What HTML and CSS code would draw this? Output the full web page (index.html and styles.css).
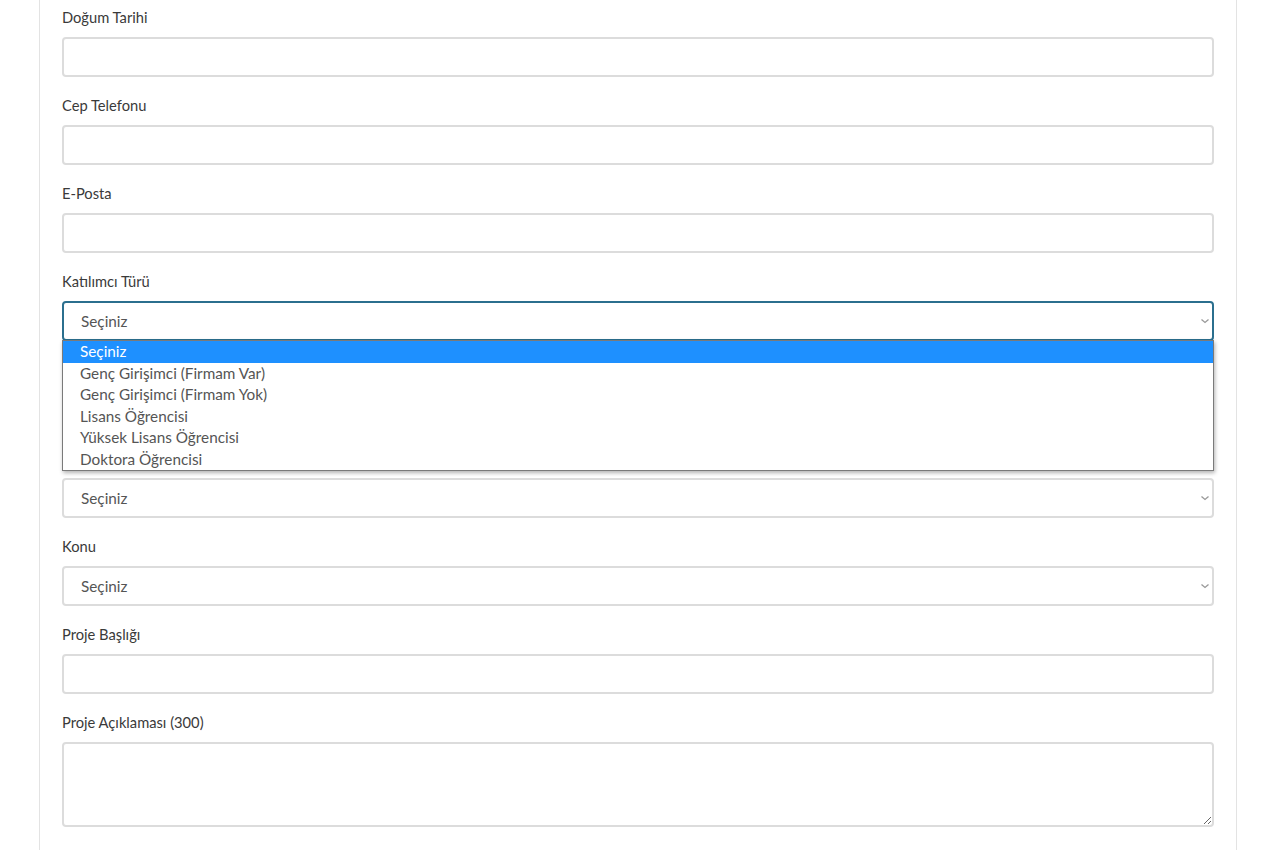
FILE: index.html
```html
<!DOCTYPE html>
<html lang="tr">

<head>
  <meta charset="UTF-8">
  <meta name="viewport" content="width=device-width, initial-scale=1.0">
  <title>Başvuru Formu</title>
  <link rel="stylesheet" href="styles.css">
</head>

<body>
  <div class="card">
    <form class="form">
      <div class="field">
        <label class="label">Doğum Tarihi</label>
        <input class="control" type="text">
      </div>
      <div class="field">
        <label class="label">Cep Telefonu</label>
        <input class="control" type="text">
      </div>
      <div class="field">
        <label class="label">E-Posta</label>
        <input class="control" type="text">
      </div>
      <div class="field">
        <label class="label">Katılımcı Türü</label>
        <div class="select_wrap">
          <select class="control select focused">
            <option>Seçiniz</option>
          </select>
          <svg class="chevron" width="10" height="6" viewBox="0 0 10 6"><path d="M1.5 1.5l3.5 3 3.5-3" fill="none" stroke="#999" stroke-width="1.3"/></svg>
          <ul class="options">
            <li class="option active">Seçiniz</li>
            <li class="option">Genç Girişimci (Firmam Var)</li>
            <li class="option">Genç Girişimci (Firmam Yok)</li>
            <li class="option">Lisans Öğrencisi</li>
            <li class="option">Yüksek Lisans Öğrencisi</li>
            <li class="option">Doktora Öğrencisi</li>
          </ul>
        </div>
      </div>
      <!-- these two sit under the open list -->
      <div class="field">
        <label class="label">&nbsp;</label>
        <input class="control" type="text">
      </div>
      <div class="field">
        <label class="label">&nbsp;</label>
        <div class="select_wrap">
          <select class="control select">
            <option>Seçiniz</option>
          </select>
          <svg class="chevron" width="10" height="6" viewBox="0 0 10 6"><path d="M1.5 1.5l3.5 3 3.5-3" fill="none" stroke="#999" stroke-width="1.3"/></svg>
        </div>
      </div>
      <div class="field">
        <label class="label">Konu</label>
        <div class="select_wrap">
          <select class="control select">
            <option>Seçiniz</option>
          </select>
          <svg class="chevron" width="10" height="6" viewBox="0 0 10 6"><path d="M1.5 1.5l3.5 3 3.5-3" fill="none" stroke="#999" stroke-width="1.3"/></svg>
        </div>
      </div>
      <div class="field">
        <label class="label">Proje Başlığı</label>
        <input class="control" type="text">
      </div>
      <div class="field">
        <label class="label">Proje Açıklaması (300)</label>
        <textarea class="control textarea"></textarea>
      </div>
    </form>
  </div>
</body>

</html>
```

FILE: styles.css
```css
body {
  margin: 0;
  background: #fff;
  font-family: Lato, "Noto Sans", sans-serif;
  color: #333;
}

.card {
  width: 1198px;
  margin: 0 0 0 39px;
  border-left: 1px solid #e3e3e3;
  border-right: 1px solid #e3e3e3;
  padding: 7px 22px 40px 22px;
  box-sizing: border-box;
}

.field {
  margin-bottom: 18.15px;
}

.label {
  display: block;
  font-size: 14.7px;
  line-height: 20px;
  margin-bottom: 10px;
  color: #3a3a3a;
  font-weight: 400;
}

.control {
  display: block;
  width: 100%;
  height: 40px;
  box-sizing: border-box;
  border: 2px solid #dcdcdc;
  border-radius: 4px;
  padding: 0 17px;
  font-family: Lato, "Noto Sans", sans-serif;
  font-size: 15.3px;
  color: #555;
  background: #fff;
  outline: none;
}

.select_wrap {
  position: relative;
}

.select {
  appearance: none;
  -webkit-appearance: none;
}

.focused {
  border-color: #2b6f8e;
}

.chevron {
  position: absolute;
  right: 4px;
  top: 17px;
}

.textarea {
  height: 85px;
  resize: vertical;
  padding-top: 8px;
}

.options {
  position: absolute;
  top: 39px;
  left: 0;
  right: 0;
  margin: 0;
  padding: 0;
  list-style: none;
  background: #fff;
  border: 1px solid #7a7a7a;
  box-shadow: 1px 2px 4px rgba(0, 0, 0, 0.3);
  z-index: 5;
}

.option {
  font-size: 15.3px;
  line-height: 21.5px;
  height: 21.5px;
  padding-left: 17px;
  color: #555;
}

.active {
  background: #1e90ff;
  color: #fff;
}
```
